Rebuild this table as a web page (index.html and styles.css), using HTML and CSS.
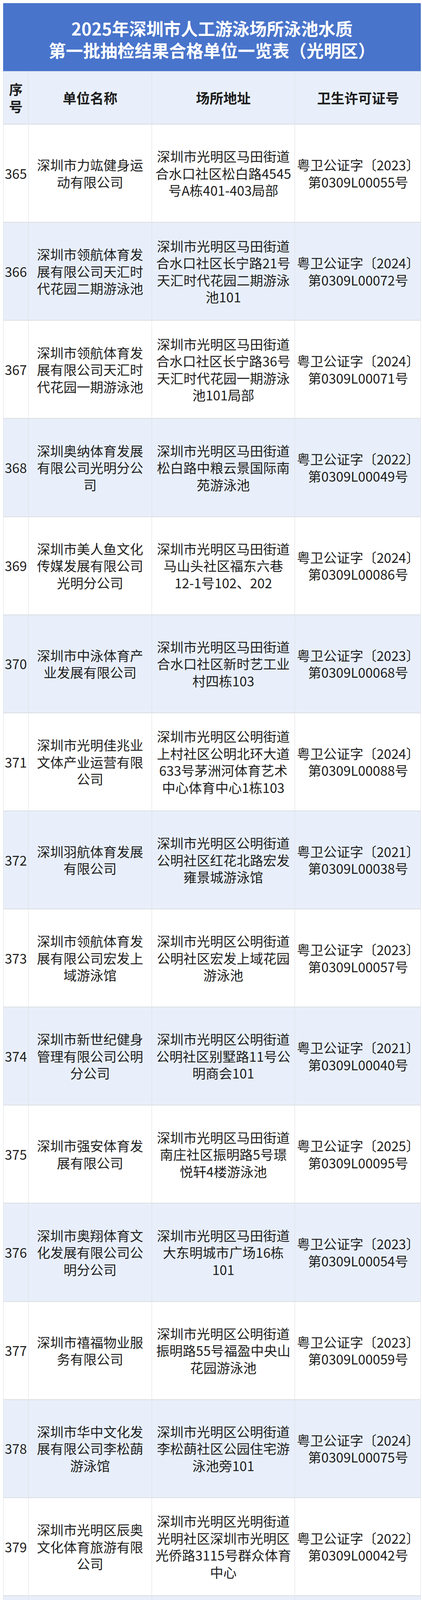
FILE: index.html
```html
<!DOCTYPE html>
<html lang="zh-CN">
<head>
<meta charset="utf-8">
<title>2025年深圳市人工游泳场所泳池水质第一批抽检结果合格单位一览表（光明区）</title>
<link rel="stylesheet" href="styles.css">
</head>
<body>
<div class="sheet">
  <div class="title">2025年深圳市人工游泳场所泳池水质<br>第一批抽检结果合格单位一览表（光明区）</div>
  <div class="row head">
    <div class="cell c1">序号</div>
    <div class="cell">单位名称</div>
    <div class="cell">场所地址</div>
    <div class="cell">卫生许可证号</div>
  </div>
  <div class="row">
    <div class="cell c1">365</div>
    <div class="cell">深圳市力竑健身运<br>动有限公司</div>
    <div class="cell">深圳市光明区马田街道<br>合水口社区松白路4545<br>号A栋401-403局部</div>
    <div class="cell">粤卫公证字〔2023〕<br>第0309L00055号</div>
  </div>
  <div class="row">
    <div class="cell c1">366</div>
    <div class="cell">深圳市领航体育发<br>展有限公司天汇时<br>代花园二期游泳池</div>
    <div class="cell">深圳市光明区马田街道<br>合水口社区长宁路21号<br>天汇时代花园二期游泳<br>池101</div>
    <div class="cell">粤卫公证字〔2024〕<br>第0309L00072号</div>
  </div>
  <div class="row">
    <div class="cell c1">367</div>
    <div class="cell">深圳市领航体育发<br>展有限公司天汇时<br>代花园一期游泳池</div>
    <div class="cell">深圳市光明区马田街道<br>合水口社区长宁路36号<br>天汇时代花园一期游泳<br>池101局部</div>
    <div class="cell">粤卫公证字〔2024〕<br>第0309L00071号</div>
  </div>
  <div class="row">
    <div class="cell c1">368</div>
    <div class="cell">深圳奥纳体育发展<br>有限公司光明分公<br>司</div>
    <div class="cell">深圳市光明区马田街道<br>松白路中粮云景国际南<br>苑游泳池</div>
    <div class="cell">粤卫公证字〔2022〕<br>第0309L00049号</div>
  </div>
  <div class="row">
    <div class="cell c1">369</div>
    <div class="cell">深圳市美人鱼文化<br>传媒发展有限公司<br>光明分公司</div>
    <div class="cell">深圳市光明区马田街道<br>马山头社区福东六巷<br>12-1号102、202</div>
    <div class="cell">粤卫公证字〔2024〕<br>第0309L00086号</div>
  </div>
  <div class="row">
    <div class="cell c1">370</div>
    <div class="cell">深圳市中泳体育产<br>业发展有限公司</div>
    <div class="cell">深圳市光明区马田街道<br>合水口社区新时艺工业<br>村四栋103</div>
    <div class="cell">粤卫公证字〔2023〕<br>第0309L00068号</div>
  </div>
  <div class="row">
    <div class="cell c1">371</div>
    <div class="cell">深圳市光明佳兆业<br>文体产业运营有限<br>公司</div>
    <div class="cell">深圳市光明区公明街道<br>上村社区公明北环大道<br>633号茅洲河体育艺术<br>中心体育中心1栋103</div>
    <div class="cell">粤卫公证字〔2024〕<br>第0309L00088号</div>
  </div>
  <div class="row">
    <div class="cell c1">372</div>
    <div class="cell">深圳羽航体育发展<br>有限公司</div>
    <div class="cell">深圳市光明区公明街道<br>公明社区红花北路宏发<br>雍景城游泳馆</div>
    <div class="cell">粤卫公证字〔2021〕<br>第0309L00038号</div>
  </div>
  <div class="row">
    <div class="cell c1">373</div>
    <div class="cell">深圳市领航体育发<br>展有限公司宏发上<br>域游泳馆</div>
    <div class="cell">深圳市光明区公明街道<br>公明社区宏发上域花园<br>游泳池</div>
    <div class="cell">粤卫公证字〔2023〕<br>第0309L00057号</div>
  </div>
  <div class="row">
    <div class="cell c1">374</div>
    <div class="cell">深圳市新世纪健身<br>管理有限公司公明<br>分公司</div>
    <div class="cell">深圳市光明区公明街道<br>公明社区别墅路11号公<br>明商会101</div>
    <div class="cell">粤卫公证字〔2021〕<br>第0309L00040号</div>
  </div>
  <div class="row">
    <div class="cell c1">375</div>
    <div class="cell">深圳市强安体育发<br>展有限公司</div>
    <div class="cell">深圳市光明区马田街道<br>南庄社区振明路5号璟<br>悦轩4楼游泳池</div>
    <div class="cell">粤卫公证字〔2025〕<br>第0309L00095号</div>
  </div>
  <div class="row">
    <div class="cell c1">376</div>
    <div class="cell">深圳市奥翔体育文<br>化发展有限公司公<br>明分公司</div>
    <div class="cell">深圳市光明区马田街道<br>大东明城市广场16栋<br>101</div>
    <div class="cell">粤卫公证字〔2023〕<br>第0309L00054号</div>
  </div>
  <div class="row">
    <div class="cell c1">377</div>
    <div class="cell">深圳市禧福物业服<br>务有限公司</div>
    <div class="cell">深圳市光明区公明街道<br>振明路55号福盈中央山<br>花园游泳池</div>
    <div class="cell">粤卫公证字〔2023〕<br>第0309L00059号</div>
  </div>
  <div class="row">
    <div class="cell c1">378</div>
    <div class="cell">深圳市华中文化发<br>展有限公司李松蓢<br>游泳馆</div>
    <div class="cell">深圳市光明区公明街道<br>李松蓢社区公园住宅游<br>泳池旁101</div>
    <div class="cell">粤卫公证字〔2024〕<br>第0309L00075号</div>
  </div>
  <div class="row">
    <div class="cell c1">379</div>
    <div class="cell">深圳市光明区辰奥<br>文化体育旅游有限<br>公司</div>
    <div class="cell">深圳市光明区光明街道<br>光明社区深圳市光明区<br>光侨路3115号群众体育<br>中心</div>
    <div class="cell">粤卫公证字〔2022〕<br>第0309L00042号</div>
  </div>
  <div class="row">
    <div class="cell c1">380</div>
    <div class="cell">深圳市康冠体育发<br>展有限公司</div>
    <div class="cell">深圳市光明区光明街道<br>观光路与邦凯路交汇处<br>金城大第花园内</div>
    <div class="cell">粤卫公证字〔2017〕<br>第0309L00014号</div>
  </div>
  <div class="row">
    <div class="cell c1">381</div>
    <div class="cell">深圳市康冠体育发<br>展有限公司新地中<br>央分公司</div>
    <div class="cell">深圳市光明区光明街道<br>光明社区新地中央1号<br>楼206</div>
    <div class="cell">粤卫公证字〔2022〕<br>第0309L00043号</div>
  </div>
  <div class="row">
    <div class="cell c1">382</div>
    <div class="cell">深圳煌越体育发展<br>有限公司光明分公<br>司</div>
    <div class="cell">深圳市光明区光明街道<br>东周社区东周一街105<br>号星河天地花园小区内</div>
    <div class="cell">粤卫公证字〔2022〕<br>第0309L00044号</div>
  </div>
  <div class="row">
    <div class="cell c1">383</div>
    <div class="cell">深圳市欧凡体育发<br>展有限公司深铁瑞<br>城游泳池</div>
    <div class="cell">深圳市光明区凤凰街道<br>甲子塘社区深铁瑞城<br>(游泳池更衣室)101-<br>103</div>
    <div class="cell">粤卫公证字〔2025〕<br>第0309L00092号</div>
  </div>
  <div class="row">
    <div class="cell c1">384</div>
    <div class="cell">深圳市新壹品实业<br>有限公司光明乐府<br>分公司</div>
    <div class="cell">深圳市光明区凤凰街道<br>东坑社区光明大道481<br>号乐府广场1A501局部</div>
    <div class="cell">粤卫公证字〔2023〕<br>第0309L00063号</div>
  </div>
  <div class="row">
    <div class="cell c1">385</div>
    <div class="cell">深圳市康乐文体发<br>展有限公司光明乐<br>府花园分公司</div>
    <div class="cell">深圳市光明区新湖街道<br>楼村社区华裕路2036号<br>乐府花园内</div>
    <div class="cell">粤卫公证字〔2022〕<br>第0309L00046号</div>
  </div>
  <div class="row">
    <div class="cell c1">386</div>
    <div class="cell">深圳市宝利来贸易<br>有限公司光明温德<br>姆至尊酒店</div>
    <div class="cell">深圳市光明区光明街道<br>光明社区创投路368号<br>温德姆至尊酒店A座3F<br>局部</div>
    <div class="cell">粤卫公证字〔2025〕<br>第0309L00089号</div>
  </div>
  <div class="foot"></div>
</div>
</body>
</html>
```

FILE: styles.css
```css
* { box-sizing: border-box; }

html, body {
  margin: 0;
  padding: 0;
  background: #ffffff;
}

body {
  font-family: "Noto Sans CJK SC", "Noto Sans", sans-serif;
  color: #1e1e1e;
}

.sheet {
  margin: 8px 3px 8px 8px;
  width: 1069px;
}

.title {
  height: 175px;
  background: #4874cb;
  color: #ffffff;
  font-weight: 700;
  font-size: 44px;
  line-height: 56px;
  text-align: center;
  padding-top: 36px;
  border-bottom: 1px solid #c9d3e6;
}

.row {
  display: grid;
  grid-template-columns: 64px 316px 366px 323px;
  height: 251.14px;
  border-bottom: 2px solid #dcdee2;
  border-left: 1px solid #dcdee2;
  border-right: 1px solid #dcdee2;
  background: #ffffff;
}

.row:nth-child(even) {
  background: #e8effa;
}

.row.head {
  height: 136px;
  background: #e8effa;
}

.cell {
  display: flex;
  align-items: center;
  justify-content: center;
  text-align: center;
  font-size: 34px;
  line-height: 43.5px;
  border-right: 1px solid #dcdee2;
  padding: 0 2px;
  white-space: nowrap;
}

.cell:last-child {
  border-right: none;
}

.c1 {
  padding: 0;
}

.head .cell {
  font-weight: 700;
  font-size: 35px;
  line-height: 44px;
  white-space: normal;
}

.foot {
  height: 67px;
  background: #4874cb;
}
```
